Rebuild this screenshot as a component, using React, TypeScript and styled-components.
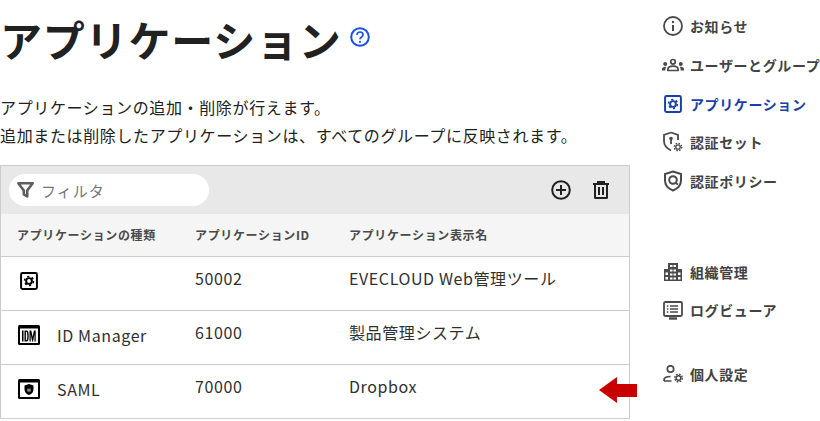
import React from "react";
import styled, { createGlobalStyle } from "styled-components";

const GlobalStyle = createGlobalStyle`
    html, body {
        margin: 0;
        padding: 0;
        background: #fff;
        overflow: hidden;
    }
    body {
        font-family: "Noto Sans CJK JP", "Noto Sans", sans-serif;
        color: #212121;
    }
`;

const Page = styled.div`
    display: flex;
    width: 820px;
    height: 421px;
    overflow: hidden;
`;

const Main = styled.main`
    width: 630px;
    flex: none;
`;

const TitleRow = styled.div`
    display: flex;
    align-items: center;
    gap: 8px;
    height: 42px;
    margin-top: 18px;
`;

const Title = styled.h1`
    margin: 0;
    font-size: 42px;
    line-height: 42px;
    font-weight: 700;
    letter-spacing: 0.8px;
    color: #212121;
`;

const HelpMark = styled.span`
    display: flex;
    margin-bottom: 4px;
`;

const Lead = styled.p`
    margin: 33px 0 16px;
    font-size: 16px;
    line-height: 28px;
    letter-spacing: 0.63px;
    color: #212121;
`;

const TableBox = styled.div`
    border: 1px solid #ccc;
    border-bottom: none;
`;

const Toolbar = styled.div`
    display: flex;
    align-items: center;
    height: 48px;
    padding: 0 20px 0 8px;
    background: #e8e8e8;
    gap: 22px;
`;

const Filter = styled.div`
    display: flex;
    align-items: center;
    gap: 6px;
    width: 200px;
    height: 32px;
    box-sizing: border-box;
    padding-left: 7px;
    margin-right: auto;
    border-radius: 16px;
    background: #fff;
    font-size: 15px;
    letter-spacing: 1px;
    color: #757575;
`;

const Grid = styled.div`
    display: grid;
    grid-template-columns: 178px 154px 1fr;
    align-items: center;
    padding-left: 16px;
    border-bottom: 1px solid #ccc;
`;

const HeadRow = styled(Grid)`
    height: 40px;
    padding-bottom: 2px;
    background: #f5f5f5;
    font-size: 12px;
    font-weight: 700;
    letter-spacing: 0.65px;
    color: #4a4a4a;
`;

const BodyRow = styled(Grid)`
    height: 47px;
    padding-bottom: 6px;
    font-size: 16px;
    letter-spacing: 0.6px;
    color: #303030;
`;

const TypeCell = styled.div`
    display: flex;
    align-items: center;
    gap: 17px;
`;

const TypeIcon = styled.span`
    display: flex;
    justify-content: center;
    width: 22px;
    margin-left: 1px;
    flex: none;
`;

const ValueCell = styled.div`
    margin-bottom: 6px;
`;

const Side = styled.nav`
    flex: none;
    width: 190px;
    padding: 7px 0 0 32px;
    box-sizing: border-box;
    white-space: nowrap;
`;

const NavItem = styled.div<{ $active?: boolean; $gap?: number }>`
    display: flex;
    align-items: center;
    gap: 6px;
    height: 38.7px;
    margin-top: ${(p) => p.$gap ?? 0}px;
    font-size: 14px;
    font-weight: 700;
    letter-spacing: 0.6px;
    color: ${(p) => (p.$active ? "#1a3fa8" : "#424242")};
`;

const NavIcon = styled.span`
    display: flex;
    justify-content: center;
    width: 22px;
    flex: none;
`;

const ArrowMark = styled.svg`
    position: absolute;
    left: 599px;
    top: 377px;
`;

function GearBox({ size = 18, color = "#000" }: { size?: number; color?: string }) {
    return (
        <svg width={size} height={size} viewBox="0 0 20 20" fill="none">
            <rect x="1.2" y="1.2" width="17.6" height="17.6" rx="1.5" stroke={color} strokeWidth="2.2" />
            <circle cx="10" cy="10" r="3.2" stroke={color} strokeWidth="2.2" />
            <circle cx="10" cy="10" r="5" stroke={color} strokeWidth="1.6" strokeDasharray="2.4 2.840" />
        </svg>
    );
}

function IdmIcon() {
    return (
        <svg width="22" height="20" viewBox="0 0 22 20">
            <rect x="0" y="0" width="22" height="20" rx="1.5" fill="#000" />
            <rect x="2" y="3.500" width="18" height="14.500" fill="#fff" />
            <path
                d="M3 5.500h1.500v11H3zM5.500 5.500h2c1.600 0 2.200 1.700 2.200 5.500s-.6 5.500-2.200 5.500h-2zm1.400 1.300v8.400h.4c.7 0 1-1.100 1-4.200s-.3-4.200-1-4.200zM10.500 5.500h1.800l1.300 6.500 1.300-6.500h1.800v11h-1.200v-7.500l-1.400 7.500h-1L11.700 9v7.500h-1.200z"
                fill="#000"
                transform="translate(1 0)"
            />
        </svg>
    );
}

function SamlIcon() {
    return (
        <svg width="22" height="20" viewBox="0 0 22 20">
            <rect x="0" y="0" width="22" height="20" rx="1.5" fill="#000" />
            <rect x="2" y="3.500" width="18" height="14.500" fill="#fff" />
            <path d="M11 5l4.500 1.600v3.900c0 2.700-2 4.600-4.500 5.500-2.500-.9-4.500-2.800-4.500-5.500V6.600z" fill="#000" />
            <rect x="9.200" y="9.600" width="3.600" height="3" fill="#888" />
        </svg>
    );
}

function FunnelIcon() {
    return (
        <svg width="19" height="18" viewBox="0 0 19 18" fill="none">
            <path d="M2.300 2.300h14.400L11.200 9.500v6l-3.400-2v-4z" stroke="#5f5f5f" strokeWidth="2.600" strokeLinejoin="round" />
        </svg>
    );
}

function PlusCircle() {
    return (
        <svg width="20" height="20" viewBox="0 0 20 20" fill="none" stroke="#212121" strokeWidth="2">
            <circle cx="10" cy="10" r="8.800" />
            <path d="M10 5v10M5 10h10" />
        </svg>
    );
}

function Trash() {
    return (
        <svg width="16" height="18" viewBox="0 0 16 18" fill="none" stroke="#212121" strokeWidth="2">
            <path d="M0 3h16M5 3V1h6v2" />
            <path d="M2 3v13.500c0 .3.2.5.5.5h11c.3 0 .5-.2.5-.5V3" />
            <path d="M6 6v8M10 6v8" />
        </svg>
    );
}

function HelpIcon() {
    return (
        <svg width="20" height="20" viewBox="0 0 20 20" fill="none" stroke="#1a4fe8" strokeWidth="2">
            <circle cx="10" cy="10" r="8.800" />
            <path d="M7 8c0-1.800 1.300-3 3-3s3 1.100 3 2.700c0 2.300-3 2.300-3 4.500" strokeWidth="1.700" />
            <circle cx="10" cy="14.800" r="1.100" fill="#1a4fe8" stroke="none" />
        </svg>
    );
}

const navColor = "#4a4a4a";

function InfoIcon() {
    return (
        <svg width="20" height="20" viewBox="0 0 20 20" fill="none" stroke={navColor} strokeWidth="1.800">
            <circle cx="10" cy="10" r="9" />
            <path d="M10 9v6" strokeWidth="2" />
            <circle cx="10" cy="6" r="1.200" fill={navColor} stroke="none" />
        </svg>
    );
}

function UsersIcon() {
    return (
        <svg width="24" height="14" viewBox="0 0 24 14" fill={navColor}>
            <circle cx="12" cy="3.500" r="2.500" fill="none" stroke={navColor} strokeWidth="1.900" />
            <path d="M6.500 13v-1.500c0-2 2.500-3.300 5.500-3.300s5.500 1.300 5.500 3.300V13z" fill="none" stroke={navColor} strokeWidth="1.900" />
            <circle cx="3.500" cy="6" r="2.200" />
            <circle cx="20.500" cy="6" r="2.200" />
            <path d="M0 13v-1.500C0 10 1.500 9 3.500 9c.4 0 .8 0 1.100.1-.6.7-.9 1.500-.9 2.400V13zM24 13v-1.500C24 10 22.500 9 20.500 9c-.4 0-.8 0-1.100.1.600.7.900 1.500.900 2.400V13z" />
        </svg>
    );
}

function ShieldKeyIcon() {
    return (
        <svg width="22" height="22" viewBox="0 0 22 22" fill="none" stroke={navColor} strokeWidth="1.800">
            <path d="M9 1.500l7 2.500v5M9 1.500L2 4v6c0 4.500 3 7.500 7 9.500" />
            <circle cx="9" cy="7.500" r="1.800" fill={navColor} stroke="none" />
            <path d="M9 8v5" strokeWidth="1.800" />
            <circle cx="16" cy="16" r="2.200" strokeWidth="1.300" />
            <circle cx="16" cy="16" r="3.700" strokeWidth="1.300" strokeDasharray="1.600 1.300" />
        </svg>
    );
}

function ShieldAtIcon() {
    return (
        <svg width="20" height="22" viewBox="0 0 20 22" fill="none" stroke={navColor} strokeWidth="2">
            <path d="M10 1.500L18 4v6.500c0 4.800-3.400 8.200-8 10-4.600-1.800-8-5.200-8-10V4z" />
            <circle cx="10" cy="10" r="3.800" strokeWidth="2" />
            <path d="M12.500 13l2.500 1.500" strokeWidth="2" />
        </svg>
    );
}

function BuildingIcon() {
    return (
        <svg width="18" height="18" viewBox="0 0 18 18" fill={navColor} fillRule="evenodd">
            <path d="M4 0h10v6h4v12H0V6h4zM6 2v2h2.500V2zm3.500 0v2H12V2zM6 6.500v2h2.500v-2zm3.500 0v2H12v-2zM1.500 9.500v2.500H4V9.500zm4.500 1v2h2.500v-2zm3.500 0v2H12v-2zm4.500-1V12h2.500V9.500zM1.500 14v2.500H4V14zm4.500.5v2h2.500v-2zm3.500 0v2H12v-2zm4.500-.5v2.500h2.500V14z" />
        </svg>
    );
}

function MonitorIcon() {
    return (
        <svg width="20" height="19" viewBox="0 0 20 19" fill="none" stroke={navColor} strokeWidth="1.800">
            <rect x="1" y="1" width="18" height="14" rx="1.500" />
            <path d="M7 5h8M7 8h8M7 11h8M3.800 5h1.500M3.800 8h1.500M3.800 11h1.500" strokeWidth="1.500" />
            <path d="M6 17.500h8" strokeWidth="2.400" />
        </svg>
    );
}

function PersonGearIcon() {
    return (
        <svg width="20" height="18" viewBox="0 0 20 18" fill="none" stroke={navColor} strokeWidth="1.700">
            <circle cx="7.500" cy="4" r="3.200" />
            <path d="M1 16v-1c0-2 2.500-3.500 6.500-3.500M1 16h7.500" />
            <circle cx="15.500" cy="13" r="2.300" strokeWidth="1.500" />
            <circle cx="15.500" cy="13" r="3.700" strokeWidth="1.500" strokeDasharray="1.700 1.200" />
        </svg>
    );
}

const rows = [
    { icon: <GearBox />, type: "", id: "50002", name: "EVECLOUD Web管理ツール" },
    { icon: <IdmIcon />, type: "ID Manager", id: "61000", name: "製品管理システム" },
    { icon: <SamlIcon />, type: "SAML", id: "70000", name: "Dropbox" },
];

const navTop = [
    { icon: <InfoIcon />, label: "お知らせ" },
    { icon: <UsersIcon />, label: "ユーザーとグループ" },
    { icon: <GearBox color="#1a3fa8" />, label: "アプリケーション", active: true },
    { icon: <ShieldKeyIcon />, label: "認証セット" },
    { icon: <ShieldAtIcon />, label: "認証ポリシー" },
];

export default function App() {
    return (
        <>
            <GlobalStyle />
            <Page>
                <Main>
                    <TitleRow>
                        <Title>アプリケーション</Title>
                        <HelpMark>
                            <HelpIcon />
                        </HelpMark>
                    </TitleRow>
                    <Lead>
                        アプリケーションの追加・削除が行えます。
                        <br />
                        追加または削除したアプリケーションは、すべてのグループに反映されます。
                    </Lead>
                    <TableBox>
                        <Toolbar>
                            <Filter>
                                <FunnelIcon />
                                フィルタ
                            </Filter>
                            <PlusCircle />
                            <Trash />
                        </Toolbar>
                        <HeadRow>
                            <div>アプリケーションの種類</div>
                            <div>アプリケーションID</div>
                            <div>アプリケーション表示名</div>
                        </HeadRow>
                        {rows.map((row) => (
                            <BodyRow key={row.id}>
                                <TypeCell>
                                    <TypeIcon>{row.icon}</TypeIcon>
                                    <span>{row.type}</span>
                                </TypeCell>
                                <ValueCell>{row.id}</ValueCell>
                                <ValueCell>{row.name}</ValueCell>
                            </BodyRow>
                        ))}
                    </TableBox>
                </Main>
                <Side>
                    {navTop.map((item) => (
                        <NavItem key={item.label} $active={item.active}>
                            <NavIcon>{item.icon}</NavIcon>
                            {item.label}
                        </NavItem>
                    ))}
                    <NavItem $gap={52}>
                        <NavIcon>
                            <BuildingIcon />
                        </NavIcon>
                        組織管理
                    </NavItem>
                    <NavItem>
                        <NavIcon>
                            <MonitorIcon />
                        </NavIcon>
                        ログビューア
                    </NavItem>
                    <NavItem $gap={25}>
                        <NavIcon>
                            <PersonGearIcon />
                        </NavIcon>
                        個人設定
                    </NavItem>
                </Side>
            </Page>
            <ArrowMark width="38" height="26" viewBox="0 0 38 26">
                <path d="M0 13L18 0v7h20v13H18v6z" fill="#c80000" />
            </ArrowMark>
        </>
    );
}
